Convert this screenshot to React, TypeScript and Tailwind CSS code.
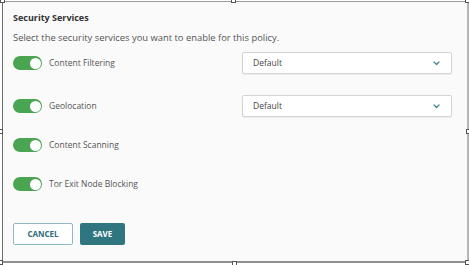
import React from "react";

const font = { fontFamily: '"Open Sans", "Liberation Sans", sans-serif' };

type Service = { label: string; select?: string };

const services: Service[] = [
  { label: "Content Filtering", select: "Default" },
  { label: "Geolocation", select: "Default" },
  { label: "Content Scanning" },
  { label: "Tor Exit Node Blocking" },
];

function Toggle() {
  return (
    <div className="flex h-[14px] w-[29px] shrink-0 items-center justify-end rounded-full bg-[#4aa552] pr-[1.5px]">
      <div className="h-[11px] w-[11px] rounded-full bg-white" />
    </div>
  );
}

function Select({ value }: { value: string }) {
  return (
    <div className="ml-auto flex h-[22px] w-[210px] items-center justify-between rounded-[2px] border border-[#d4d4d4] bg-white pl-[10px] pr-[11px] shadow-[0_1px_1px_rgba(0,0,0,0.06)]">
      <span className="text-[8.5px] text-[#444]">{value}</span>
      <svg width="7" height="5" viewBox="0 0 7 5" fill="none">
        <path d="M1 1l2.5 2.5L6 1" stroke="#3a8490" strokeWidth="1.2" strokeLinecap="round" strokeLinejoin="round" />
      </svg>
    </div>
  );
}

function Handle({ className }: { className: string }) {
  return <div className={`absolute h-[5px] w-[5px] border border-[#555] bg-white ${className}`} />;
}

export default function App() {
  const rowGaps = ["mt-[7px]", "mt-[21px]", "mt-[17px]", "mt-[17px]"];

  return (
    <div className="relative h-[265px] w-[469px] bg-white pl-[2px] pt-[1px]" style={font}>
      <div className="h-[262px] w-[467px] border-b-2 border-l border-r-2 border-t border-b-[#8f8f8f] border-l-[#6b6b6b] border-r-[#b5b5b5] border-t-[#9a9a9a] bg-[#fafafa]">
        <div className="flex flex-col pl-[10px] pr-[15px] pt-[9px]">
          <h2 className="h-[14px] text-[9px] font-bold leading-[14px] text-[#333]">
            Security Services
          </h2>
          <p className="mt-[6px] h-[14px] text-[9.4px] leading-[14px] text-[#555]">
            Select the security services you want to enable for this policy.
          </p>

          {services.map((s, i) => (
            <div key={s.label} className={`flex h-[22px] items-center ${rowGaps[i]}`}>
              <Toggle />
              <span className="ml-[7px] text-[8.5px] text-[#555]">{s.label}</span>
              {s.select && <Select value={s.select} />}
            </div>
          ))}

          <div className="mt-[28px] flex gap-[7px]">
            <button className="h-[22px] w-[60px] rounded-[2px] border border-[#8fb9c0] bg-white text-[8px] font-bold text-[#2d6e79]">
              CANCEL
            </button>
            <button className="h-[22px] w-[45px] rounded-[2px] bg-[#2f7681] text-[8px] font-bold text-white">
              SAVE
            </button>
          </div>
        </div>
      </div>

      {/* selection handles */}
      <Handle className="left-0 top-[-2px]" />
      <Handle className="left-[231px] top-[-2px]" />
      <Handle className="left-[465px] top-[-2px]" />
      <Handle className="left-[-2px] top-[129px]" />
      <Handle className="left-[466px] top-[129px]" />
      <Handle className="left-[-2px] top-[260px]" />
      <Handle className="left-[232px] top-[261px]" />
      <Handle className="left-[465px] top-[260px]" />
    </div>
  );
}
